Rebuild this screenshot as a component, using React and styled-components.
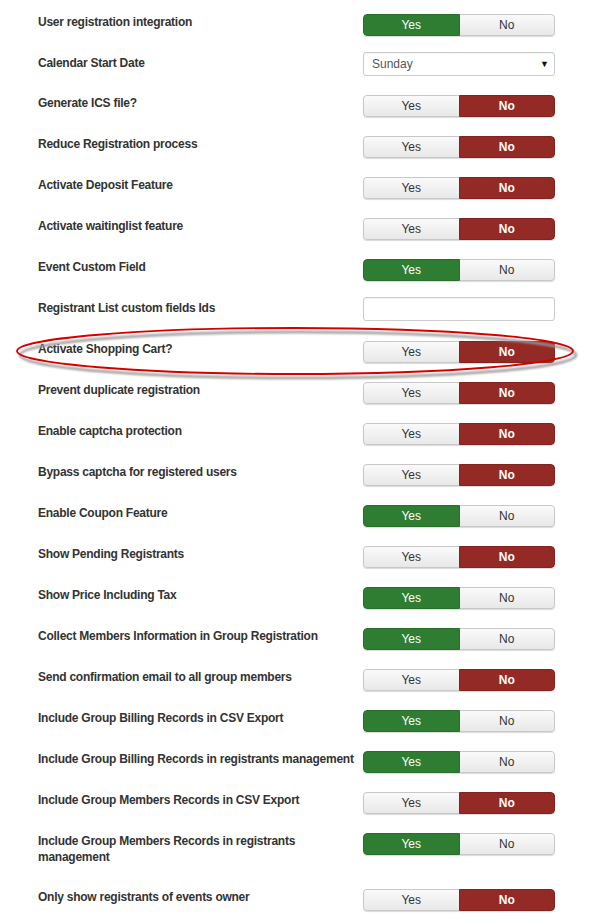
import React from "react";
import styled, { createGlobalStyle, css } from "styled-components";

const GlobalStyle = createGlobalStyle`
  html, body { margin: 0; padding: 0; background: #fff; }
  body { font-family: "Liberation Sans", Arial, sans-serif; }
`;

const Page = styled.div`
  position: relative;
  width: 613px;
  padding: 14px 0 0 38px;
  box-sizing: border-box;
`;

const Row = styled.div`
  display: flex;
  align-items: flex-start;
  min-height: 21px;
  margin-bottom: 19px;
`;

const Label = styled.div`
  width: 325px;
  flex: none;
  font-size: 12px;
  font-weight: bold;
  line-height: 16px;
  letter-spacing: -0.25px;
  color: #333;
  white-space: nowrap;
  padding-bottom: ${(p) => (p.$multi ? "5px" : "0")};
  box-sizing: border-box;
`;

const Toggle = styled.div`
  display: flex;
  width: 192px;
  height: 22px;
  border-radius: 4px;
  box-shadow: 0 1px 1px rgba(0, 0, 0, 0.15);
  overflow: hidden;
`;

const ToggleBtn = styled.div`
  flex: 1;
  display: flex;
  align-items: center;
  justify-content: center;
  font-size: 12px;
  box-sizing: border-box;
  ${(p) =>
    p.$active === "yes"
      ? css`
          background: #2f7d32;
          color: #fff;
          border: 1px solid #2a6e2c;
        `
      : p.$active === "no"
      ? css`
          background: #942a25;
          color: #fff;
          font-weight: bold;
          border: 1px solid #82231f;
        `
      : css`
          background: linear-gradient(#fafafa, #e8e8e8);
          color: #333;
          border: 1px solid #c8c8c8;
        `}
  &:first-child {
    border-radius: 4px 0 0 4px;
    ${(p) => !p.$active && css`border-right: none;`}
  }
  &:last-child {
    border-radius: 0 4px 4px 0;
    ${(p) => !p.$active && css`border-left: none;`}
  }
`;

const Select = styled.div`
  width: 192px;
  height: 24px;
  margin-top: -3px;
  margin-bottom: -2px;
  box-sizing: border-box;
  border: 1px solid #ccc;
  border-radius: 3px;
  box-shadow: inset 0 1px 1px rgba(0, 0, 0, 0.05);
  display: flex;
  align-items: center;
  justify-content: space-between;
  padding: 0 5px 0 8px;
  font-size: 12px;
  color: #555;
  background: #fff;
`;

const Caret = styled.span`
  font-size: 9px;
  color: #111;
`;

const TextInput = styled.div`
  width: 192px;
  height: 24px;
  margin-top: -3px;
  margin-bottom: 1px;
  box-sizing: border-box;
  border: 1px solid #ccc;
  border-radius: 3px;
  box-shadow: inset 0 1px 1px rgba(0, 0, 0, 0.05);
  background: #fff;
`;

const Annotation = styled.svg`
  position: absolute;
  left: 10px;
  top: 320px;
  width: 580px;
  height: 64px;
  pointer-events: none;
  overflow: visible;
`;

const rows = [
  { label: "User registration integration", type: "toggle", value: "yes" },
  { label: "Calendar Start Date", type: "select", value: "Sunday" },
  { label: "Generate ICS file?", type: "toggle", value: "no" },
  { label: "Reduce Registration process", type: "toggle", value: "no" },
  { label: "Activate Deposit Feature", type: "toggle", value: "no" },
  { label: "Activate waitinglist feature", type: "toggle", value: "no" },
  { label: "Event Custom Field", type: "toggle", value: "yes" },
  { label: "Registrant List custom fields Ids", type: "input" },
  { label: "Activate Shopping Cart?", type: "toggle", value: "no" },
  { label: "Prevent duplicate registration", type: "toggle", value: "no" },
  { label: "Enable captcha protection", type: "toggle", value: "no" },
  { label: "Bypass captcha for registered users", type: "toggle", value: "no" },
  { label: "Enable Coupon Feature", type: "toggle", value: "yes" },
  { label: "Show Pending Registrants", type: "toggle", value: "no" },
  { label: "Show Price Including Tax", type: "toggle", value: "yes" },
  { label: "Collect Members Information in Group Registration", type: "toggle", value: "yes" },
  { label: "Send confirmation email to all group members", type: "toggle", value: "no" },
  { label: "Include Group Billing Records in CSV Export", type: "toggle", value: "yes" },
  { label: "Include Group Billing Records in registrants management", type: "toggle", value: "yes" },
  { label: "Include Group Members Records in CSV Export", type: "toggle", value: "no" },
  { label: "Include Group Members Records in registrants management", type: "toggle", value: "yes", multi: true },
  { label: "Only show registrants of events owner", type: "toggle", value: "no" },
];

function Control({ row }) {
  if (row.type === "select")
    return (
      <Select>
        <span>{row.value}</span>
        <Caret>▼</Caret>
      </Select>
    );
  if (row.type === "input") return <TextInput />;
  return (
    <Toggle>
      <ToggleBtn $active={row.value === "yes" ? "yes" : undefined}>Yes</ToggleBtn>
      <ToggleBtn $active={row.value === "no" ? "no" : undefined}>No</ToggleBtn>
    </Toggle>
  );
}

export default function App() {
  return (
    <>
      <GlobalStyle />
      <Page>
        {rows.map((row) => (
          <Row key={row.label}>
            <Label $multi={row.multi}>
              {row.multi ? (
                <>
                  Include Group Members Records in registrants
                  <br />
                  management
                </>
              ) : (
                row.label
              )}
            </Label>
            <Control row={row} />
          </Row>
        ))}
        <Annotation viewBox="0 0 580 64">
          <defs>
            <filter id="sh" x="-5%" y="-30%" width="110%" height="160%">
              <feGaussianBlur stdDeviation="1.2" />
            </filter>
          </defs>
          <ellipse cx="287" cy="33" rx="278" ry="23" fill="none" stroke="#999" strokeWidth="2.5" filter="url(#sh)" transform="translate(1,2)" />
          <ellipse cx="285" cy="31" rx="278" ry="23" fill="none" stroke="#d40000" strokeWidth="1.8" />
        </Annotation>
      </Page>
    </>
  );
}
